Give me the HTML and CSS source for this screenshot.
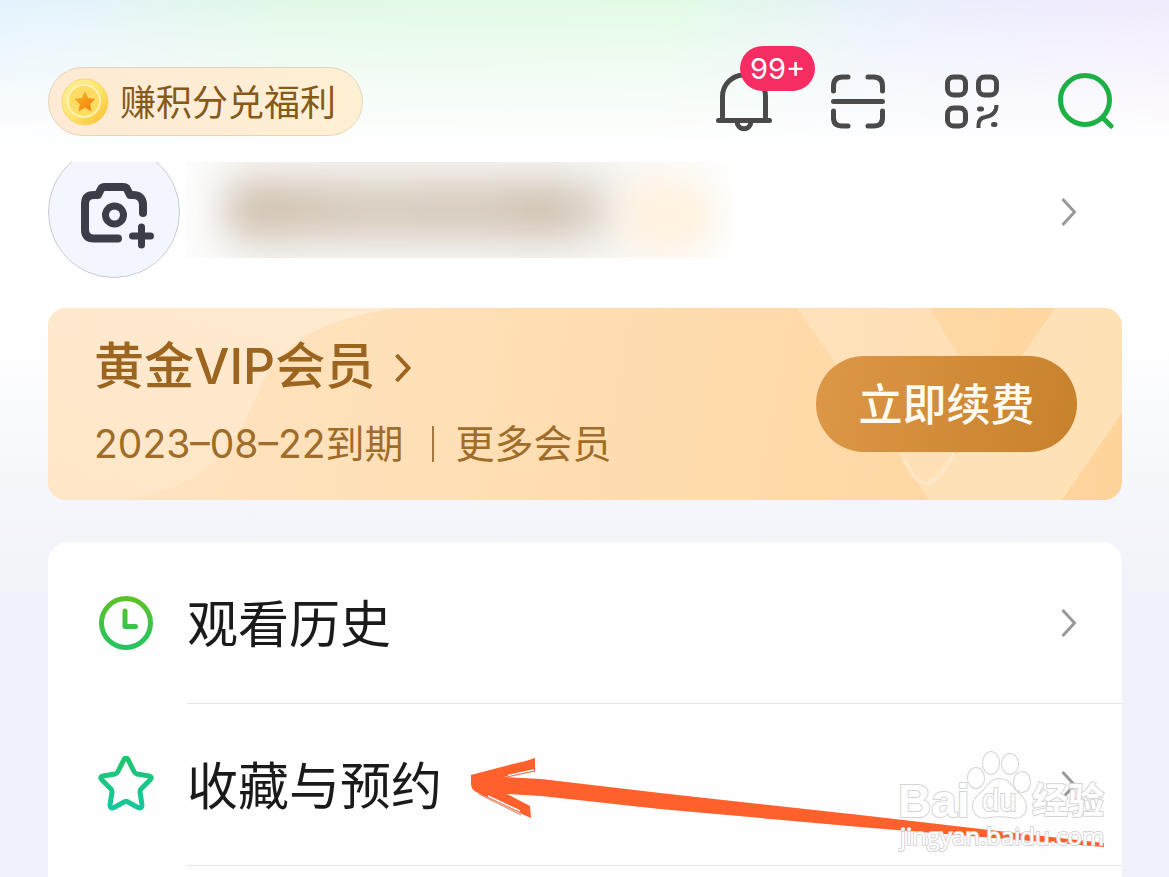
FILE: index.html
```html
<!DOCTYPE html>
<html lang="zh-CN">
<head>
<meta charset="utf-8">
<meta name="viewport" content="width=device-width, initial-scale=1">
<title>我的</title>
<link rel="stylesheet" href="styles.css">
</head>
<body>
<div class="page">
  <header class="topbar">
    <a class="points" href="#">
      <svg class="coin" viewBox="0 0 48 48" aria-hidden="true">
        <defs>
          <linearGradient id="coinFace" x1="0" y1="0" x2="1" y2="1"><stop offset="0" stop-color="#fff0a0"/><stop offset=".55" stop-color="#fde26e"/><stop offset="1" stop-color="#fbb928"/></linearGradient>
          <linearGradient id="coinStar" x1="0" y1="0" x2="1" y2="1"><stop offset="0" stop-color="#ffb41e"/><stop offset="1" stop-color="#f07d0c"/></linearGradient>
        </defs>
        <circle cx="24" cy="24" r="23" fill="url(#coinFace)" stroke="#f8d766" stroke-width="1"/>
        <circle cx="23" cy="23" r="16" fill="#fddc62" stroke="#fff3ae" stroke-width="2"/>
        <path d="M24 14l3 6.300 7 .9-5.100 4.800 1.300 7-6.200-3.400-6.200 3.400 1.300-7-5.100-4.800 7-.9z" fill="url(#coinStar)" stroke="#e89a25" stroke-width=".6" stroke-linejoin="round"/>
      </svg>
      <span>赚积分兑福利</span>
    </a>
    <nav class="tools">
      <button class="tool" type="button" aria-label="消息">
        <svg viewBox="0 0 56 58" fill="none" stroke="#4a4a4a" stroke-width="5" stroke-linecap="round">
          <path d="M6.500 47V23.500a21.500 21.500 0 0 1 43 0V47"/><path d="M2.500 47.500h51"/><path d="M21 49c1 9 13 9 14 0"/>
        </svg>
        <span class="badge">99+</span>
      </button>
      <button class="tool" type="button" aria-label="扫一扫">
        <svg viewBox="0 0 56 58" fill="none" stroke="#4a4a4a" stroke-width="5" stroke-linecap="round">
          <path d="M3.500 18v-5q0-9 9-9H18M38 4h5.500q9 0 9 9v5M3.500 38v7q0 8 9 8H18M38 53h5.500q9 0 9-8v-7M3.500 28.500h49"/>
        </svg>
      </button>
      <button class="tool" type="button" aria-label="二维码">
        <svg viewBox="0 0 56 58" fill="none" stroke="#4a4a4a" stroke-width="5" stroke-linecap="round">
          <rect x="3.500" y="4" width="18" height="18" rx="6"/><rect x="34.500" y="4" width="18" height="18" rx="6"/><rect x="3.500" y="35" width="18" height="18" rx="6"/>
          <path d="M34.500 55v-3q0-7 7-8 11-2 11-12" stroke-width="4" stroke-linecap="butt"/><path d="M35.500 36h2M49.500 51.500h1.500"/>
        </svg>
      </button>
      <button class="tool" type="button" aria-label="搜索">
        <svg viewBox="0 0 56 58" fill="none" stroke="#1db045" stroke-width="5" stroke-linecap="round">
          <circle cx="27" cy="27" r="24.500"/><path d="M45 45l8 8"/>
        </svg>
      </button>
    </nav>
  </header>

  <section class="profile">
    <button class="avatar" type="button" aria-label="更换头像">
      <svg viewBox="0 0 76 68" fill="none" stroke="#3b3d49" stroke-width="8" stroke-linecap="round" stroke-linejoin="round">
        <path d="M38 56.500H14q-9 0-9-9V22q0-9 9-9h4l3-6q1-2 4-2h18q3 0 4 2l3 6h3q9 0 10 9v9"/>
        <circle cx="34.500" cy="33" r="9" stroke-width="7"/>
        <path d="M61.500 45v18M52.500 54h18" stroke-width="7"/>
      </svg>
    </button>
    <div class="name-mask"><div class="smudge"></div><div class="smudge-gold"></div></div>
    <svg class="chevron" viewBox="0 0 16 30" fill="none" stroke="#999" stroke-width="3"><path d="M1.500 2l12 13-12 13"/></svg>
  </section>

  <section class="vip">
    <svg class="vip-art" viewBox="0 0 1074 192" preserveAspectRatio="xMaxYMid slice" aria-hidden="true">
      <defs>
        <linearGradient id="glow" x1="0" y1="1" x2="1" y2="0"><stop offset="0" stop-color="#ffe6c8"/><stop offset="1" stop-color="#ffeed9"/></linearGradient>
        <linearGradient id="band" x1="0" y1="0" x2="1" y2="1"><stop offset="0" stop-color="#fff" stop-opacity=".22"/><stop offset="1" stop-color="#fff" stop-opacity=".2"/></linearGradient>
      </defs>
      <path d="M0 0h350C275 10 235 35 216 72 192 118 185 175 74 192H0z" fill="url(#glow)" opacity=".75"/>
      <path d="M749 0H882L930 80 905 150 892 167Q880 180 868 172z" fill="url(#band)"/>
      <path d="M1007 0H1074V105L1014 192H880L868 172Q880 180 892 167L909 146 975 46z" fill="#ffe3bd" opacity=".8"/>
      <path d="M856 152l8 14q14 18 28 0l15-20" fill="none" stroke="#ffedd5" stroke-width="4" opacity=".5"/>
    </svg>
    <div class="vip-info">
      <a class="vip-title" href="#">黄金VIP会员
        <svg class="vip-arrow" viewBox="0 0 16 30" fill="none" stroke="#9c651f" stroke-width="4"><path d="M1.500 2l12 13-12 13"/></svg>
      </a>
      <div class="vip-meta"><span>2023–08–22到期</span><i class="bar"></i><a href="#">更多会员</a></div>
    </div>
    <button class="renew" type="button">立即续费</button>
  </section>

  <main class="menu">
    <a class="row" href="#">
      <svg class="row-icon" viewBox="0 0 56 58" fill="none" stroke-width="5" stroke-linecap="round" stroke-linejoin="round">
        <defs><linearGradient id="clockInk" x1="0" y1="0" x2="0" y2="58" gradientUnits="userSpaceOnUse"><stop offset="0" stop-color="#60c022"/><stop offset="1" stop-color="#20c568"/></linearGradient></defs>
        <g stroke="url(#clockInk)"><circle cx="28" cy="29" r="24.500"/><path d="M27 17v15.500h10.500"/></g>
      </svg>
      <span class="row-body"><span class="label">观看历史</span>
        <svg class="chevron" viewBox="0 0 16 30" fill="none" stroke="#999" stroke-width="3"><path d="M1.500 2l12 13-12 13"/></svg></span>
    </a>
    <div class="row-wrap">
      <a class="row" href="#">
        <svg class="row-icon" viewBox="0 0 56 58" fill="none" stroke-width="5" stroke-linecap="round" stroke-linejoin="round">
          <defs><linearGradient id="starInk" x1="0" y1="0" x2="0" y2="58" gradientUnits="userSpaceOnUse"><stop offset="0" stop-color="#20c46d"/><stop offset="1" stop-color="#18c6a2"/></linearGradient></defs>
          <path stroke="url(#starInk)" d="M26 3.500q2-3 4 0l6 12q1 2 3 2.500l12 2q4 1 1 4l-9 9q-1 1-1 3l2 13q0 4-4 2.500L29 45.500q-1-.5-2 0l-11 6q-4 1.500-4-2.500l2-13q0-2-1-3l-9-9q-3-3 1-4l12-2q2-.5 3-2.500z"/>
        </svg>
        <span class="row-body"><span class="label">收藏与预约</span>
          <svg class="chevron" viewBox="0 0 16 30" fill="none" stroke="#999" stroke-width="3"><path d="M1.500 2l12 13-12 13"/></svg></span>
      </a>
      <svg class="pointer" viewBox="0 0 636 92" aria-hidden="true">
        <path d="M1 17L47 5Q57 3 65 0V13L34 19L71 21L190 35L390 57L634 85V89L390 69L190 51L71 38L37 36L60 48L61 60L54 57L6 34Q1 31 1 26z" fill="#ff602c"/>
        <path d="M38 17.500l26-5.500M18 38l32 15" fill="none" stroke="#fff" stroke-width="1.500"/>
        <path d="M37 19l28-6M9 36l42 21" fill="none" stroke="#d95329" stroke-width=".8"/>
      </svg>
      <svg class="watermark" viewBox="0 0 214 110" aria-hidden="true">
        <g class="mark">
          <text x="0" y="69" class="mark-latin">Bai</text>
          <ellipse cx="78" cy="30" rx="8" ry="10"/><ellipse cx="93" cy="15" rx="8" ry="11"/><ellipse cx="112" cy="16" rx="8" ry="10"/><ellipse cx="124" cy="34" rx="8" ry="10"/>
          <path d="M102 31C111 31 113 38 118 43 124 48 128 53 128 59 128 68 120 71 112 69 105 68 98 68 91 69 82 71 75 67 75 58 75 51 81 47 85 43 91 37 93 31 102 31z"/>
          <text x="84" y="63" class="mark-du">du</text>
          <text x="134" y="66" class="mark-cjk">经验</text>
          <text x="2" y="97" class="mark-url">jingyan.baidu.com</text>
        </g>
      </svg>
    </div>
  </main>
</div>
</body>
</html>
```
FILE: styles.css
```css
* { box-sizing: border-box; }

body {
  margin: 0;
  font-family: Inter, "Noto Sans CJK SC", sans-serif;
  background: #eff3f9;
}

a { color: inherit; text-decoration: none; }

button {
  border: 0;
  padding: 0;
  font: inherit;
  cursor: pointer;
}

svg { display: block; flex: none; }

.page {
  min-height: 100vh;
  display: flex;
  flex-direction: column;
  background:
    linear-gradient(180deg, rgba(255, 255, 255, .1) 0, rgba(255, 255, 255, .5) 60px, #fff 150px, #fff 330px, #f4f6fb 500px, #eff3f9 600px),
    linear-gradient(98deg, #e0f1fd 0, #e2f3f8 8%, #dff8e4 22%, #dffae2 52%, #e6effb 68%, #ebeafd 80%, #f5e6fd 100%);
}

.topbar {
  display: flex;
  align-items: center;
  justify-content: space-between;
  padding: 67px 55px 26px 48px;
}

.points {
  display: flex;
  align-items: center;
  gap: 11px;
  height: 69px;
  padding: 0 26px 0 12px;
  border: 1px solid #e6d3b4;
  border-radius: 35px;
  background: linear-gradient(90deg, #feead5, #fff0d4);
  color: #85591a;
  font-size: 36px;
}

.points span { padding-bottom: 4px; }

.coin { width: 48px; height: 48px; }

.tools { display: flex; gap: 58px; }

.tool {
  position: relative;
  width: 56px;
  height: 58px;
  background: none;
}

.badge {
  position: absolute;
  left: 24px;
  top: -27px;
  width: 75px;
  height: 45px;
  border-radius: 23px;
  background: #f52d62;
  color: #fff;
  font-size: 29px;
  line-height: 45px;
  text-align: center;
}

.profile {
  display: flex;
  align-items: flex-start;
  overflow: hidden;
  padding: 0 92px 30px 48px;
}

.avatar {
  display: grid;
  place-items: center;
  flex: none;
  width: 132px;
  height: 132px;
  margin-top: -16px;
  border: 1px solid #c9cbd0;
  border-radius: 50%;
  background: #f3f6fe;
}

.avatar svg { width: 76px; height: 68px; margin: 8px 0 0 8px; }

.name-mask {
  position: relative;
  width: 552px;
  height: 96px;
  margin: 0 auto 0 5px;
  overflow: hidden;
  background: linear-gradient(90deg, #fdfdfd, #f7f5f2 15%, #f7f5f2 65%, #fff);
}

.smudge, .smudge-gold {
  position: absolute;
  filter: blur(20px);
}

.smudge {
  inset: 22px 120px 22px 44px;
  background: linear-gradient(90deg, #c8b8a4, #d3c7b8 30%, #d2c6b7 70%, #c8baa8 82%, #e6e0d8);
}

.smudge-gold {
  inset: 20px 26px 8px 440px;
  background: #fff1dc;
}

.chevron { width: 16px; height: 30px; }

.profile .chevron { margin-top: 35px; }

.vip {
  position: relative;
  display: flex;
  align-items: center;
  justify-content: space-between;
  margin: 0 47px 42px 48px;
  padding: 26px 45px 30px 46px;
  border-radius: 18px;
  overflow: hidden;
  background: linear-gradient(100deg, #ffe6c5 0, #ffddb1 50%, #ffd49b 100%);
  color: #9c651f;
}

.vip-art {
  position: absolute;
  inset: 0;
  width: 100%;
  height: 100%;
}

.vip-info { position: relative; }

.vip-title {
  display: flex;
  align-items: center;
  gap: 20px;
  font-size: 50px;
  font-weight: 500;
  line-height: 64px;
}

.vip-arrow { width: 16px; height: 30px; margin-top: 4px; }

.vip-meta {
  display: flex;
  align-items: center;
  margin-top: 20px;
  color: #a06c2a;
  font-size: 39px;
  font-weight: 400;
  line-height: 52px;
}

.bar {
  width: 2px;
  height: 36px;
  margin: 0 22px 0 28px;
  background: #a8763a;
}

.renew {
  position: relative;
  width: 261px;
  height: 96px;
  margin-top: 4px;
  padding-bottom: 4px;
  border-radius: 48px;
  background: linear-gradient(100deg, #dc9748, #c8812b);
  color: #fffaf0;
  font-size: 44px;
  font-weight: 500;
}

.menu {
  flex: 1;
  margin: 0 47px 0 48px;
  border-radius: 20px 20px 0 0;
  background: #fefefe;
}

.row-wrap { position: relative; }

.row {
  display: flex;
  align-items: center;
  gap: 33px;
  padding-left: 50px;
  color: #1a1a1a;
  font-size: 51px;
}

.row-icon { width: 56px; height: 58px; }

.row-body {
  display: flex;
  flex: 1;
  align-items: center;
  justify-content: space-between;
  height: 162px;
  padding-right: 45px;
  border-bottom: 1px solid #e4e4e6;
}

.label { padding-bottom: 4px; }

.pointer {
  position: absolute;
  left: 422px;
  top: 54px;
  width: 636px;
  height: 92px;
}

.watermark {
  position: absolute;
  right: 10px;
  top: 44px;
  width: 214px;
  height: 110px;
}

.mark {
  fill: #fff;
  stroke: #d4d4d6;
  stroke-width: 2px;
  paint-order: stroke;
}

.mark-latin { font: 700 46px "Liberation Sans", sans-serif; }
.mark-du { font: 400 31px "Liberation Sans", sans-serif; }
.mark-cjk { font: 700 36px "Noto Sans CJK SC", sans-serif; }
.mark-url { font: 400 24px "Open Sans", sans-serif; }
```
